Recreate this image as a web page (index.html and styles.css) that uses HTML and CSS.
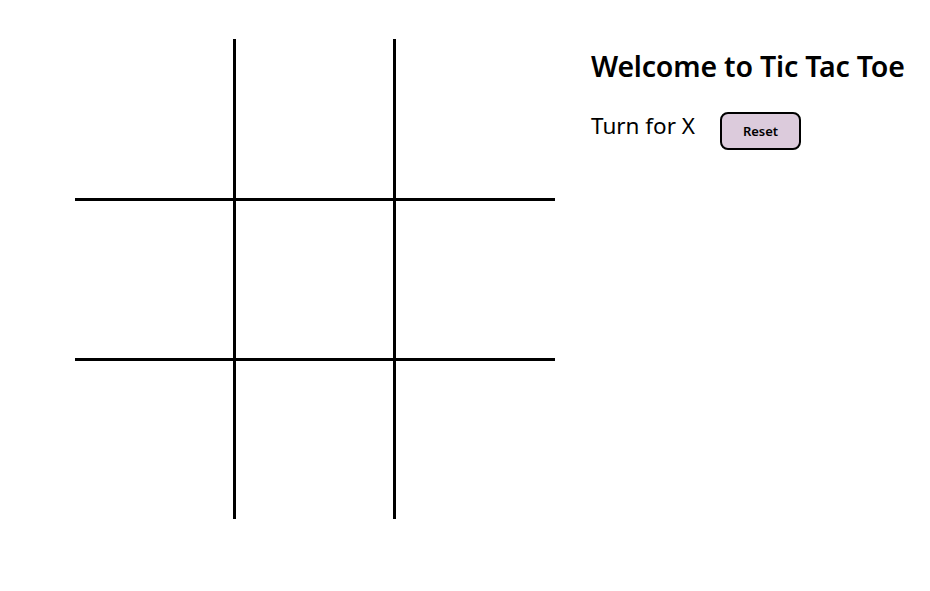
FILE: index.html
```html
<!DOCTYPE html>
<html>
<head>
<meta charset="utf-8">
<link rel="stylesheet" href="styles.css">
</head>
<body>
<div class="page">
  <div class="board">
    <div class="cell r1 c1"></div><div class="cell r1 c2"></div><div class="cell r1 c3"></div>
    <div class="cell r2 c1"></div><div class="cell r2 c2"></div><div class="cell r2 c3"></div>
    <div class="cell r3 c1"></div><div class="cell r3 c2"></div><div class="cell r3 c3"></div>
  </div>
  <div class="side">
    <h1 class="title">Welcome to Tic Tac Toe</h1>
    <div class="status">
      <span class="turn">Turn for X</span>
      <button class="reset">Reset</button>
    </div>
  </div>
</div>
</body>
</html>
```
FILE: styles.css
```css
body {
  margin: 0;
  background: #fff;
  font-family: "Noto Sans", sans-serif;
  color: #000;
}
.page {
  display: flex;
  padding: 39px 0 0 75px;
  gap: 36px;
}
.board {
  display: grid;
  grid-template-columns: 161px 160px 159px;
  grid-template-rows: 162px 160px 158px;
}
.cell {
  box-sizing: border-box;
}
.c1, .c2 { border-right: 3px solid #000; }
.r1, .r2 { border-bottom: 3px solid #000; }
.side {
  display: flex;
  flex-direction: column;
}
.title {
  margin: 9px 0 0;
  font-size: 28.5px;
  font-weight: 600;
  letter-spacing: -0.2px;
  line-height: 36px;
}
.status {
  display: flex;
  align-items: center;
  gap: 25px;
  margin-top: 17px;
}
.turn {
  font-size: 22.5px;
  line-height: 30px;
}
.reset {
  width: 81px;
  height: 38px;
  box-sizing: border-box;
  border: 2px solid #000;
  border-radius: 8px;
  background: #dccbdc;
  font-family: "Noto Sans", sans-serif;
  font-size: 13px;
  font-weight: 600;
  color: #000;
  padding: 0;
  margin-top: 11px;
}
```
